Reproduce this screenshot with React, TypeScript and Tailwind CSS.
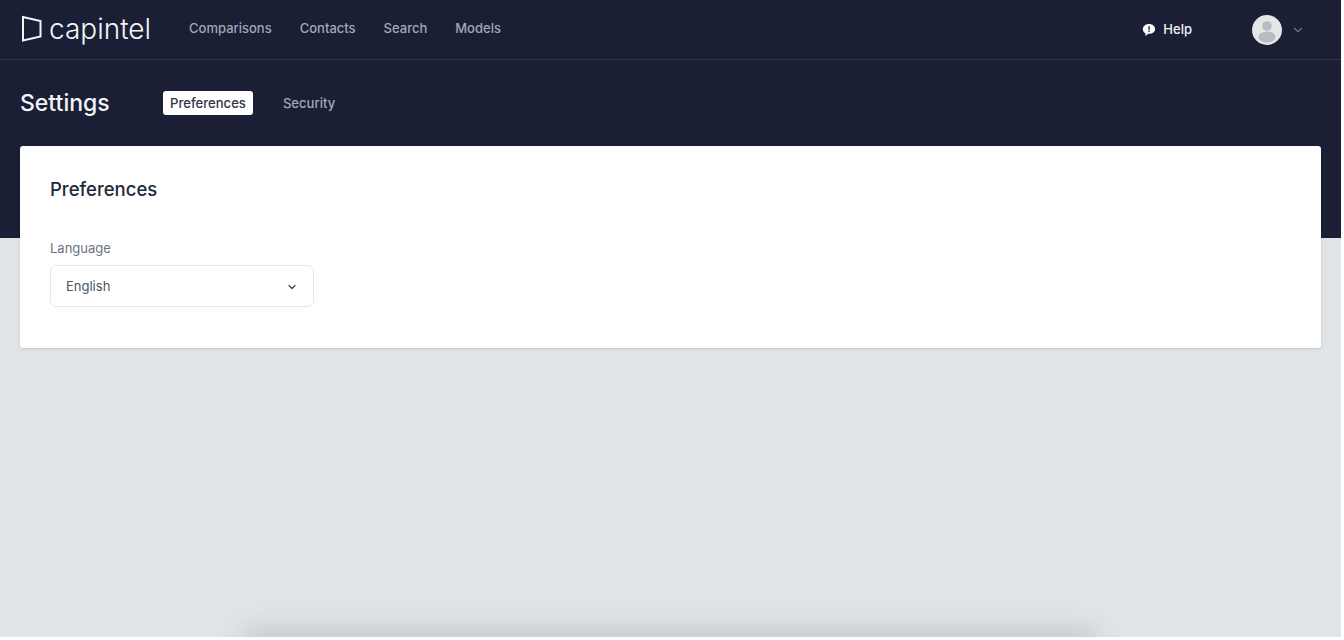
import { ChevronDown } from "lucide-react";

const navLinks = ["Comparisons", "Contacts", "Search", "Models"];

const Logo = () => (
  <div className="flex items-center gap-[7px] pb-[2px]">
    <svg width="20" height="27" viewBox="0 0 20 27" fill="none">
      <path d="M1 2 L18.5 6 V21.5 L1 25.5 Z" stroke="#f3f4f6" strokeWidth="2" />
    </svg>
    <span className="text-[28px] leading-none font-light text-gray-100 font-['Inter',sans-serif]">
      capintel
    </span>
  </div>
);

const App = () => {
  return (
    <div className="h-[640px] bg-white font-['Inter',sans-serif] overflow-hidden">
      <div className="relative h-[637px] w-[1341px] bg-[#e1e4e7] overflow-hidden">
        {/* dark header block */}
        <div className="h-[238px] bg-[#1a1f36]">
          <nav className="flex h-[60px] items-center border-b border-white/10 pl-[22px] pr-[36px]">
            <Logo />
            <div className="ml-[38px] flex gap-[28px] pb-[1px] text-[13px] font-medium text-[#a3a7b5]">
              {navLinks.map((link) => (
                <span key={link}>{link}</span>
              ))}
            </div>
            <div className="ml-auto flex items-center">
              <div className="flex items-center gap-[7px] text-[13px] font-medium text-gray-100">
                <svg width="14" height="14" viewBox="0 0 13 13">
                  <path
                    d="M6.5 1C3.2 1 .8 3 .8 5.8c0 1.700 1 3.100 2.500 3.900L3 12l3-2c.2 0 .3 0 .5 0 3.300 0 5.700-1.900 5.700-4.200C12.200 3 9.800 1 6.500 1z"
                    fill="#f9fafb"
                  />
                  <rect x="5.900" y="3" width="1.300" height="3.300" fill="#1a1f36" />
                  <rect x="5.900" y="7" width="1.300" height="1.300" fill="#1a1f36" />
                </svg>
                Help
              </div>
              <div className="ml-[60px] h-[30px] w-[30px] overflow-hidden rounded-full bg-[#e5e6e8]">
                <svg width="30" height="30" viewBox="0 0 30 30">
                  <circle cx="15" cy="11" r="4.800" fill="#b9bbc0" />
                  <ellipse cx="15" cy="22" rx="8.500" ry="5.500" fill="#b9bbc0" />
                </svg>
              </div>
              <ChevronDown className="ml-[9px] h-[14px] w-[14px] text-[#6f7484]" />
            </div>
          </nav>

          <div className="flex items-center pl-[20px] pt-[31px]">
            <h1 className="w-[90px] text-[23px] leading-[24px] font-medium text-gray-100">Settings</h1>
            <div className="ml-[53px] flex items-center gap-[30px] text-[13.100px] font-medium">
              <span className="rounded-[3px] bg-white px-[7px] py-[3px] leading-[18px] text-[#2f3447]">
                Preferences
              </span>
              <span className="pt-[1px] text-[#a3a7b5]">Security</span>
            </div>
          </div>
        </div>

        {/* settings card */}
        <div className="relative z-10 mx-[20px] -mt-[92px] h-[202px] rounded-[3px] bg-white px-[30px] pt-[31px] shadow-sm">
          <h2 className="text-[18.500px] leading-[24px] font-medium text-gray-800">Preferences</h2>
          <label className="mt-[37px] block text-[13px] leading-[20px] text-gray-500">Language</label>
          <div className="mt-[7px] flex h-[42px] w-[264px] items-center justify-between rounded-md border border-gray-200 bg-white px-[15px] pt-[1px] text-[13px] text-gray-600">
            English
            <ChevronDown className="h-[12px] w-[12px] text-gray-700" strokeWidth={2.500} />
          </div>
        </div>

        {/* shadow of something below the fold */}
        <div className="absolute -bottom-[8px] left-[250px] h-[8px] w-[840px] rounded-md shadow-[0_0_24px_8px_rgba(60,66,87,0.18)]" />
      </div>
    </div>
  );
};

export default App;
